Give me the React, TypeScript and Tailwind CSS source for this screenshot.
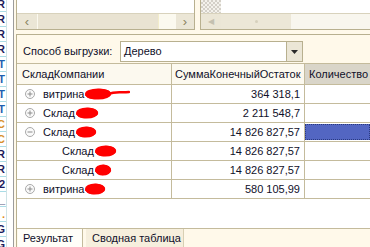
import type { ReactNode } from 'react';

const font = { fontFamily: '"Liberation Sans", Arial, sans-serif' };

const stripRows = [
  { ch: 'R', c: 'text-[#1c1c5c]' },
  { ch: 'R', c: 'text-[#1c1c5c]' },
  { ch: 'R', c: 'text-[#1c1c5c]' },
  { ch: 'R', c: 'text-[#1c1c5c]' },
  { ch: 'T', c: 'text-[#1f5fb0]' },
  { ch: 'T', c: 'text-[#1f5fb0]' },
  { ch: 'T', c: 'text-[#1f5fb0]' },
  { ch: 'T', c: 'text-[#1f5fb0]' },
  { ch: 'C', c: 'text-[#d8902a]' },
  { ch: 'C', c: 'text-[#d8902a]' },
  { ch: 'R', c: 'text-[#1c1c5c]' },
  { ch: 'R', c: 'text-[#1c1c5c]' },
  { ch: '2', c: 'text-[#1c1c5c]' },
  { ch: '_', c: 'text-[#1c1c5c]' },
  { ch: '.', c: 'text-[#e08a20]' },
  { ch: 'G', c: 'text-[#1c1c5c]' },
  { ch: 'G', c: 'text-[#1c1c5c]' },
];

// red marker blots hiding the names
function Scribble({ w, long }: { w: number; long?: boolean }) {
  const bw = long ? 28 : w;
  return (
    <svg width={w} height="16" viewBox={`0 0 ${w} 16`} className="shrink-0">
      <ellipse cx={bw / 2} cy="8" rx={bw / 2 - 1} ry="5.5" fill="#ff0000" />
      <path
        d={`M2 9 C 4 3, ${bw - 6} 2, ${bw - 2} 7 C ${bw} 12, 6 14, 3 10`}
        fill="none"
        stroke="#ff0000"
        strokeWidth="2"
        strokeLinecap="round"
      />
      {long && (
        <path d={`M${bw - 4} 8 C ${bw + 4} 5, ${w - 10} 7, ${w - 1} 6`} fill="none" stroke="#ff0000" strokeWidth="2.5" strokeLinecap="round" />
      )}
    </svg>
  );
}

function TreeIcon({ minus }: { minus?: boolean }) {
  return (
    <svg width="10" height="10" viewBox="0 0 10 10" className="shrink-0">
      <circle cx="5" cy="5" r="4.5" fill="#fafafa" stroke="#a8a8a8" />
      <line x1="2.5" y1="5" x2="7.5" y2="5" stroke="#8c8c8c" />
      {!minus && <line x1="5" y1="2.5" x2="5" y2="7.5" stroke="#8c8c8c" />}
    </svg>
  );
}

interface Row {
  name: string;
  level: 1 | 2;
  icon?: 'plus' | 'minus';
  sum: string;
  scribble: number;
  long?: boolean;
  selected?: boolean;
}

const rows: Row[] = [
  { name: 'витрина', level: 1, icon: 'plus', sum: '364 318,1', scribble: 46, long: true },
  { name: 'Склад', level: 1, icon: 'plus', sum: '2 211 548,7', scribble: 24 },
  { name: 'Склад', level: 1, icon: 'minus', sum: '14 826 827,57', scribble: 22, selected: true },
  { name: 'Склад', level: 2, sum: '14 826 827,57', scribble: 23 },
  { name: 'Склад', level: 2, sum: '14 826 827,57', scribble: 18 },
  { name: 'витрина', level: 1, icon: 'plus', sum: '580 105,99', scribble: 22 },
];

function ScrollBtn({ children, className = '' }: { children: ReactNode; className?: string }) {
  return (
    <div className={`flex items-center justify-center bg-[#ebe6d6] ${className}`}>{children}</div>
  );
}

export default function App() {
  return (
    <div
      className="flex h-[247px] w-[370px] overflow-hidden bg-[#fff9ea] text-[11px] text-[#10102a]"
      style={font}
    >
      {/* left list strip */}
      <div className="flex w-[14px] shrink-0 border-r border-[#9c9c9c] bg-white">
        <div className="mt-[-3px] w-[7px] overflow-hidden border-r border-[#cfe3e6]">
          {stripRows.map((r, i) => (
            <div
              key={i}
              className={`flex h-[15px] items-center justify-end border-b border-[#a9dce6] pr-[1px] text-[11px] font-bold leading-none ${r.c}`}
            >
              {r.ch}
            </div>
          ))}
        </div>
      </div>

      <div className="flex min-w-0 flex-1 flex-col pl-[2px]">
        {/* top panels */}
        <div className="flex h-[30px] shrink-0">
          <div className="flex w-[179px] flex-col border-b border-l border-r border-[#b8b08f] bg-white">
            <div className="h-[13px]" />
            <div className="flex h-[16px] border-t border-[#d8d2bc] bg-[#fbf9ef]">
              <ScrollBtn className="w-[20px] text-[13px] text-[#8a8460]">‹</ScrollBtn>
              <div className="ml-[1px] w-[121px] border-r border-[#f2eccb] bg-[#e9e3d2]" />
              <div className="flex-1" />
              <ScrollBtn className="w-[18px] text-[13px] text-[#8a8460]">›</ScrollBtn>
            </div>
          </div>
          <div className="w-[5px]" />
          <div className="flex flex-1 flex-col border-b border-l border-[#b8b08f] bg-white">
            <div className="flex h-[13px]">
              <div className="w-[20px] bg-[repeating-conic-gradient(#d4d0c8_0%_25%,#f4f2ec_0%_50%)] bg-[length:4px_4px]" />
            </div>
            <div className="flex h-[16px] border-t border-[#d8d2bc] bg-[#f8f6ee]">
              <ScrollBtn className="w-[20px] text-[8px] text-[#c4c0b0]">◀</ScrollBtn>
              <div className="flex w-[70px] items-center justify-center bg-[#ece7d7]">
                <div className="h-[3px] w-[3px] rounded-full bg-[#d6d0bc]" />
              </div>
              <div className="flex-1" />
            </div>
          </div>
        </div>

        <div className="h-[4px] shrink-0" />

        {/* lower panel */}
        <div className="flex min-h-0 flex-1 flex-col border-l border-t border-[#b8b08f]">
          <div className="flex h-[27px] shrink-0 items-center pt-[6px]">
            <div className="w-[103px] pl-[6px] text-[11px]">Способ выгрузки:</div>
            <div className="flex h-[21px] w-[183px] border border-[#b8b08f] bg-white">
              <div className="flex flex-1 items-center pl-[3px]">Дерево</div>
              <div className="flex w-[16px] items-center justify-center border-l border-[#b8b08f] bg-[#ebe6d6]">
                <svg width="7" height="4" viewBox="0 0 7 4">
                  <path d="M0 0 H7 L3.5 4 Z" fill="#2a2a2a" />
                </svg>
              </div>
            </div>
          </div>

          {/* table */}
          <div className="mt-[1px] flex min-h-0 flex-1 flex-col border-t border-[#c4bb9c] bg-white">
            <div className="flex h-[21px] shrink-0 border-b border-[#c4bb9c] bg-[#fcf9ef]">
              <div className="flex w-[155px] items-center border-r border-[#c4bb9c] pl-[5px]">
                СкладКомпании
              </div>
              <div className="flex w-[133px] items-center border-r border-[#c4bb9c] pl-[3px]">
                СуммаКонечныйОстаток
              </div>
              <div className="flex flex-1 items-center whitespace-nowrap bg-[#d9d5c9] pl-[4px]">
                Количество
              </div>
            </div>

            {rows.map((r, i) => (
              <div key={i} className="flex h-[19px] shrink-0 border-b border-[#c4bb9c]">
                <div
                  className={`flex w-[155px] items-center border-r border-[#c4bb9c] ${
                    r.level === 1 ? 'pl-[8px]' : 'pl-[45px]'
                  }`}
                >
                  {r.icon && <TreeIcon minus={r.icon === 'minus'} />}
                  <span className={r.icon ? 'ml-[8px]' : ''}>{r.name}</span>
                  <Scribble w={r.scribble} long={r.long} />
                </div>
                <div className="flex w-[133px] items-center justify-end border-r border-[#c4bb9c] pr-[4px]">
                  {r.sum}
                </div>
                <div className="flex-1 py-[1px]">
                  {r.selected && (
                    <div className="h-full border border-dotted border-[#2a3a80] bg-[#5366c2]" />
                  )}
                </div>
              </div>
            ))}

            <div className="flex-1" />

            {/* tabs */}
            <div className="flex h-[19px] shrink-0 border-t border-[#c4bb9c] bg-[#fff9ea]">
              <div className="ml-[1px] flex w-[65px] items-center border-r border-[#c4bb9c] bg-[#fffef8] pl-[5px]">
                Результат
              </div>
              <div className="ml-[3px] flex w-[98px] items-center border-r border-[#d8d0b4] bg-[#f6efdd] pl-[6px]">
                Сводная таблица
              </div>
            </div>
          </div>
        </div>
      </div>
    </div>
  );
}
